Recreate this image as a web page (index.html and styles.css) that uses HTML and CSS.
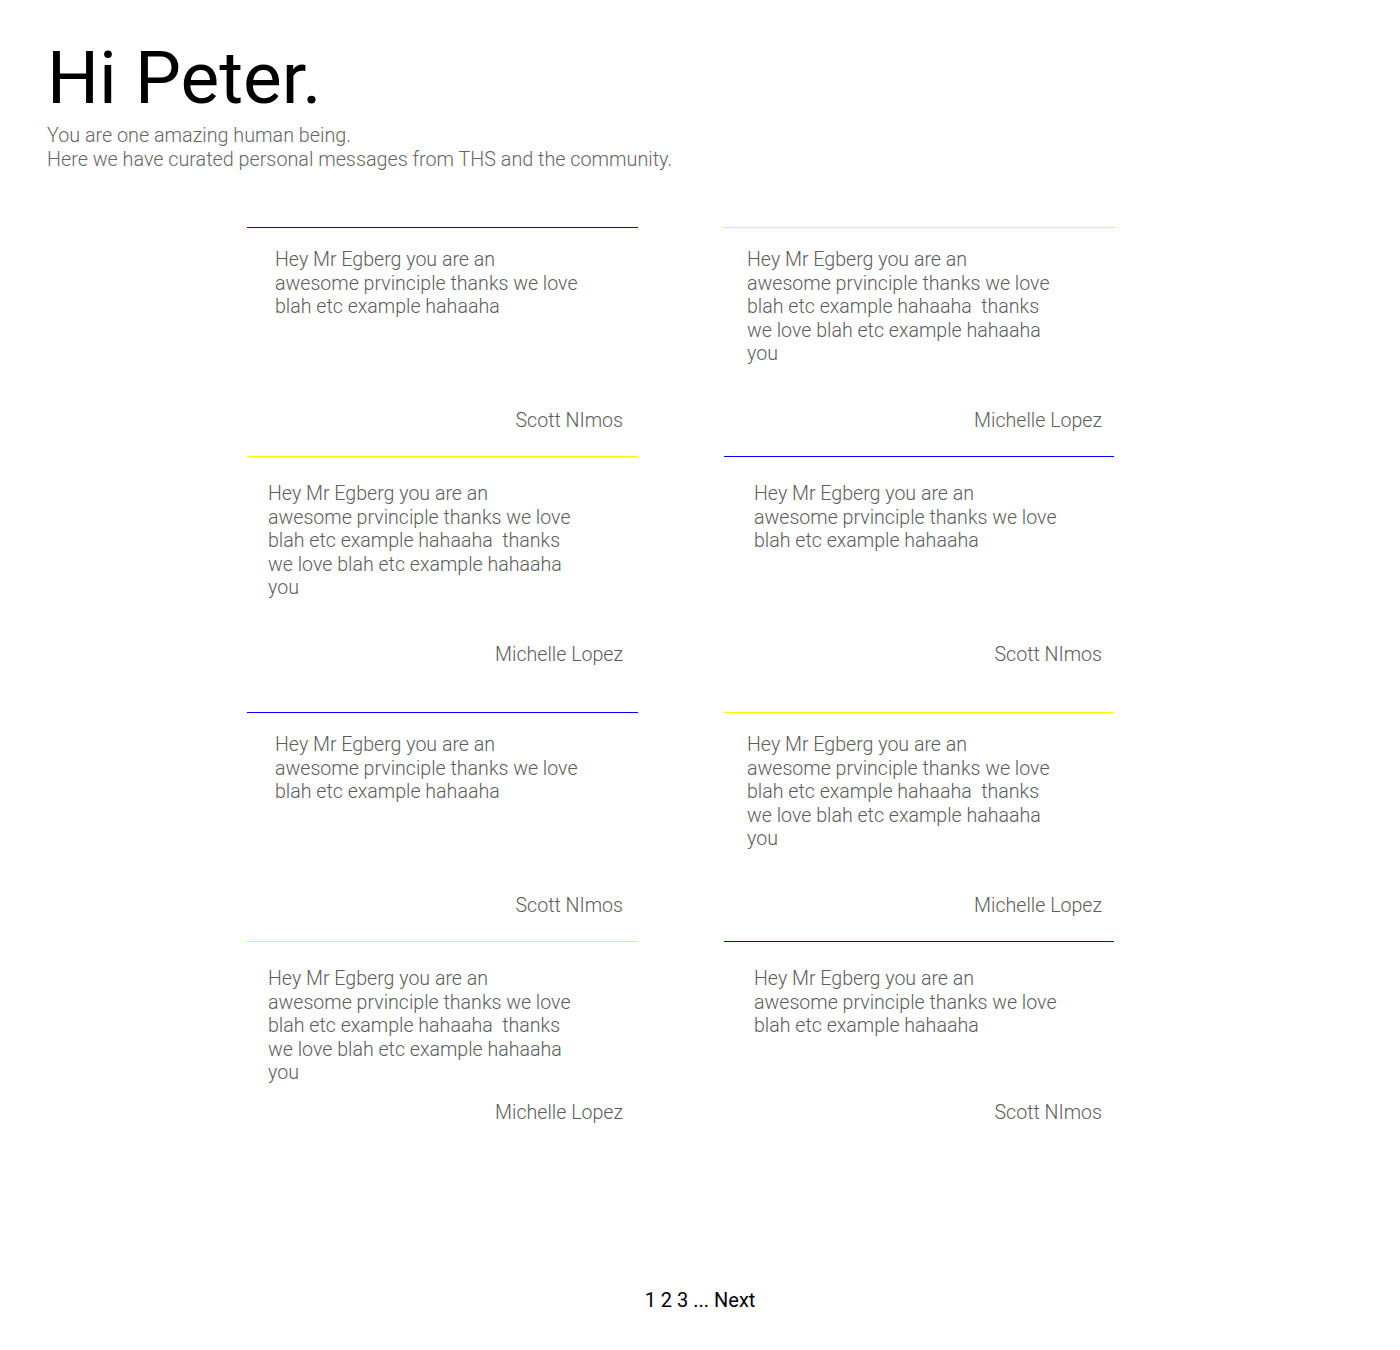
FILE: index.html
```html
<!DOCTYPE html>
<html lang="en">
<head>
<meta charset="utf-8">
<title>Hi Peter.</title>
<link rel="stylesheet" href="styles.css">
</head>
<body>
<header class="intro">
  <h1 class="intro__title">Hi Peter.</h1>
  <p class="intro__text">You are one amazing human being.<br>Here we have curated personal messages from THS and the community.</p>
</header>

<main class="messages">
  <article class="card card--a card--left-short line-blue">
    <p class="card__text">Hey Mr Egberg you are an<br>awesome prvinciple thanks we love<br>blah etc example hahaaha</p>
    <p class="card__author">Scott NImos</p>
  </article>
  <article class="card card--a card--right-long line-yellow">
    <p class="card__text">Hey Mr Egberg you are an<br>awesome prvinciple thanks we love<br>blah etc example hahaaha&nbsp; thanks<br>we love blah etc example hahaaha<br>you</p>
    <p class="card__author">Michelle Lopez</p>
  </article>

  <article class="card card--b card--left-long line-yellow">
    <p class="card__text">Hey Mr Egberg you are an<br>awesome prvinciple thanks we love<br>blah etc example hahaaha&nbsp; thanks<br>we love blah etc example hahaaha<br>you</p>
    <p class="card__author">Michelle Lopez</p>
  </article>
  <article class="card card--b card--right-short line-blue">
    <p class="card__text">Hey Mr Egberg you are an<br>awesome prvinciple thanks we love<br>blah etc example hahaaha</p>
    <p class="card__author">Scott NImos</p>
  </article>

  <article class="card card--a card--left-short line-blue">
    <p class="card__text">Hey Mr Egberg you are an<br>awesome prvinciple thanks we love<br>blah etc example hahaaha</p>
    <p class="card__author">Scott NImos</p>
  </article>
  <article class="card card--a card--right-long line-yellow">
    <p class="card__text">Hey Mr Egberg you are an<br>awesome prvinciple thanks we love<br>blah etc example hahaaha&nbsp; thanks<br>we love blah etc example hahaaha<br>you</p>
    <p class="card__author">Michelle Lopez</p>
  </article>

  <article class="card card--c card--left-long line-yellow">
    <p class="card__text">Hey Mr Egberg you are an<br>awesome prvinciple thanks we love<br>blah etc example hahaaha&nbsp; thanks<br>we love blah etc example hahaaha<br>you</p>
    <p class="card__author">Michelle Lopez</p>
  </article>
  <article class="card card--c card--right-short line-blue">
    <p class="card__text">Hey Mr Egberg you are an<br>awesome prvinciple thanks we love<br>blah etc example hahaaha</p>
    <p class="card__author">Scott NImos</p>
  </article>
</main>

<nav class="pager">1 2 3 ... Next</nav>
</body>
</html>
```

FILE: styles.css
```css
* {
  box-sizing: border-box;
}

html, body {
  margin: 0;
  background: #ffffff;
}

body {
  font-family: Roboto, "Liberation Sans", sans-serif;
  color: #000;
  padding: 42px 48px 0 47px;
}

.intro__title {
  margin: 0;
  font-size: 73px;
  line-height: 72px;
  font-weight: 400;
  color: #000;
}

.intro__text {
  margin: 10px 0 0 0;
  font-size: 19.75px;
  line-height: 24px;
  font-weight: 300;
  color: #666;
}

.messages {
  display: grid;
  grid-template-columns: 391px 390px;
  column-gap: 86px;
  margin: 55px 0 0 200px;
}

.card {
  display: flex;
  flex-direction: column;
  border-top: 1px solid #000;
}

.card__text,
.card__author {
  margin: 0;
  font-size: 19.6px;
  line-height: 23.5px;
  font-weight: 300;
  color: #5c5c5c;
  white-space: nowrap;
}

.card__author {
  margin-top: auto;
  text-align: right;
}

.card--a {
  height: 229px;
  padding-top: 20px;
  padding-bottom: 24px;
}

.card--b {
  height: 256px;
  padding-top: 25px;
  padding-bottom: 46px;
}

.card--c {
  padding-top: 25px;
}

.card--c .card__text {
  margin-bottom: 16px;
}

.card--left-short { padding-left: 28px; padding-right: 15px; }
.card--left-long { padding-left: 21px; padding-right: 15px; }
.card--right-long { padding-left: 23px; padding-right: 12px; }
.card--right-short { padding-left: 30px; padding-right: 12px; }

.line-yellow { border-top-color: #ffff00; }
.line-blue { border-top-color: #0000ff; }

.pager {
  margin: 164px 0 0 -47px;
  width: 1400px;
  text-align: center;
  font-size: 20px;
  line-height: 24px;
  font-weight: 400;
  color: #000;
}
```
